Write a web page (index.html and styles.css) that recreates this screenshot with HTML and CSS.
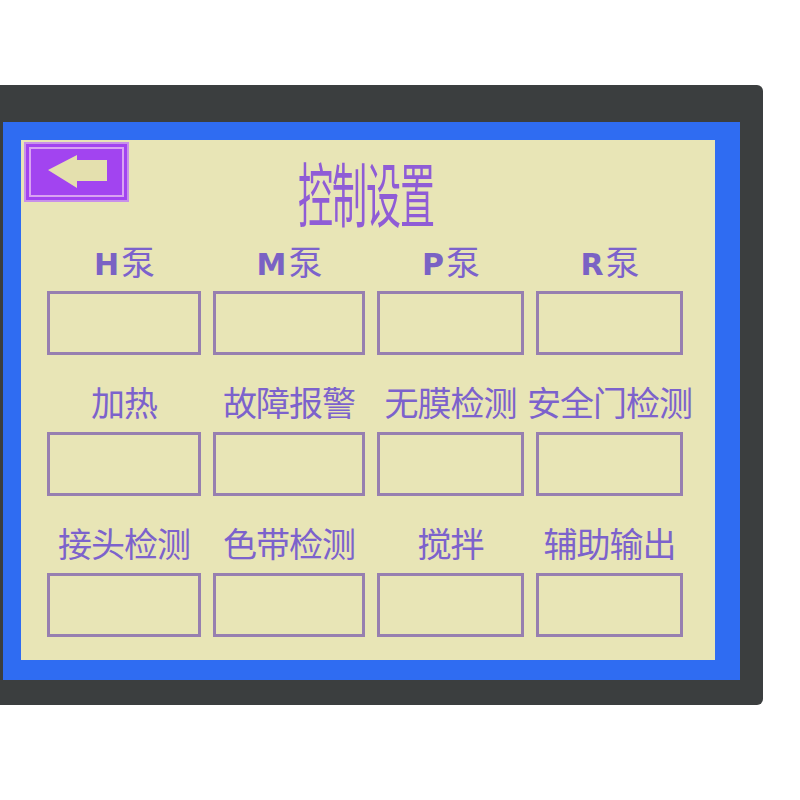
FILE: index.html
```html
<!DOCTYPE html>
<html lang="zh-CN">
<head>
    <meta charset="UTF-8">
    <meta name="viewport" content="width=device-width, initial-scale=1.0">
    <title>控制设置</title>
    <link rel="stylesheet" href="styles.css">
</head>
<body>
    <div class="bezel">
        <div class="panel">
            <div class="screen">
                <!-- cabeçalho: botão voltar + título -->
                <div class="header">
                    <button class="back" type="button">
                        <svg width="105" height="60" viewBox="0 0 105 60">
                            <polygon points="24,28 53,13 53,18 83,18 83,39 53,39 53,46" fill="#e4e0ae"/>
                        </svg>
                    </button>
                    <h1 class="title">控制设置</h1>
                </div>

                <div class="grid">
                    <div class="cell"><span class="label"><b>H</b>泵</span><div class="box"></div></div>
                    <div class="cell"><span class="label"><b>M</b>泵</span><div class="box"></div></div>
                    <div class="cell"><span class="label"><b>P</b>泵</span><div class="box"></div></div>
                    <div class="cell"><span class="label"><b>R</b>泵</span><div class="box"></div></div>

                    <div class="cell"><span class="label">加热</span><div class="box"></div></div>
                    <div class="cell"><span class="label">故障报警</span><div class="box"></div></div>
                    <div class="cell"><span class="label">无膜检测</span><div class="box"></div></div>
                    <div class="cell"><span class="label">安全门检测</span><div class="box"></div></div>

                    <div class="cell"><span class="label">接头检测</span><div class="box"></div></div>
                    <div class="cell"><span class="label">色带检测</span><div class="box"></div></div>
                    <div class="cell"><span class="label">搅拌</span><div class="box"></div></div>
                    <div class="cell"><span class="label">辅助输出</span><div class="box"></div></div>
                </div>
            </div>
        </div>
    </div>
</body>
</html>
```

FILE: styles.css
```css
body {
    margin: 0;
    background: #ffffff;
    font-family: "Noto Sans CJK SC", "DejaVu Sans", sans-serif;
}
.bezel {
    margin-top: 85px;
    width: 763px;
    height: 620px;
    background: #3b3e3f;
    border-radius: 0 6px 6px 0;
    padding-top: 37px;
    box-sizing: border-box;
}
.panel {
    margin-left: 3px;
    width: 737px;
    height: 558px;
    background: #2f6cf2;
    padding: 18px 25px 0 18px;
    box-sizing: border-box;
}
.screen {
    height: 520px;
    background: #e8e5b6;
    padding: 0 30px 0 26px;
    position: relative;
}
.header {
    height: 91px;
    display: flex;
    justify-content: center;
}
.back {
    position: absolute;
    left: 3px;
    top: 2px;
    width: 105px;
    height: 60px;
    padding: 0;
    background: #a244f0;
    border: 2px solid #c890ea;
    box-shadow: inset 0 0 0 3px #a244f0, inset 0 0 0 5px #d9a2f2;
    box-sizing: border-box;
}
.back svg {
    display: block;
    margin: -2px;
}
.title {
    margin: 12px 0 0;
    font-size: 70px;
    font-weight: normal;
    line-height: 80px;
    color: #8f5cd6;
    transform: scaleX(0.5);
    white-space: nowrap;
    letter-spacing: -2px;
}
/* 4 colunas x 3 linhas */
.grid {
    display: grid;
    grid-template-columns: 154px 152px 147px 147px;
    column-gap: 12px;
    row-gap: 17px;
}
.cell {
    display: flex;
    flex-direction: column;
    align-items: center;
}
.label {
    height: 60px;
    line-height: 60px;
    font-size: 34px;
    color: #7c62cc;
    white-space: nowrap;
    letter-spacing: -1px;
}
.label b {
    font-family: "DejaVu Sans", sans-serif;
    font-weight: bold;
    font-size: 30px;
    color: #7a62c4;
    margin-right: 3px;
}
.box {
    width: 100%;
    height: 64px;
    border: 3px solid #977fb0;
    box-sizing: border-box;
}
```
